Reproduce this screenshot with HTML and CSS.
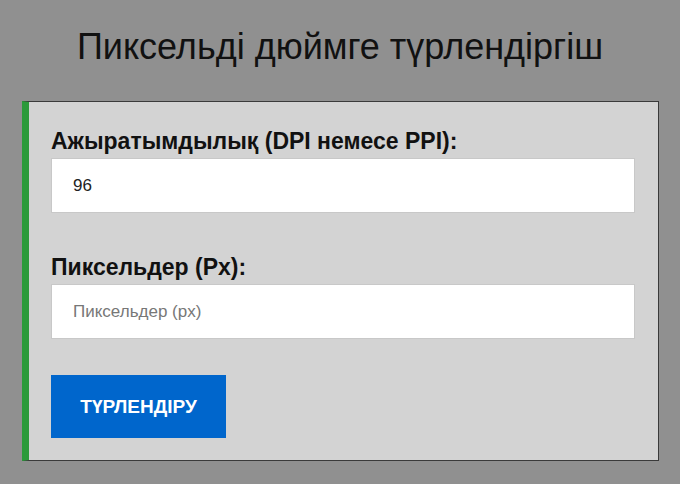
FILE: index.html
```html
<!DOCTYPE html>
<html lang="kk">
<head>
<meta charset="utf-8">
<title>Пиксельді дюймге түрлендіргіш</title>
<link rel="stylesheet" href="styles.css">
</head>
<body>
<h1 class="title">Пиксельді дюймге түрлендіргіш</h1>
<div class="panel">
  <div class="field">
    <label class="label" for="dpi">Ажыратымдылық (DPI немесе PPI):</label>
    <input class="input" id="dpi" type="text" value="96">
  </div>
  <div class="field">
    <label class="label" for="px">Пиксельдер (Px):</label>
    <input class="input" id="px" type="text" placeholder="Пиксельдер (px)">
  </div>
  <button class="btn" type="button">ТҮРЛЕНДІРУ</button>
</div>
</body>
</html>
```
FILE: styles.css
```css
html, body {
  margin: 0;
  padding: 0;
}
body {
  background: #909090;
  font-family: "Liberation Sans", Arial, sans-serif;
  color: #111;
  width: 680px;
  height: 484px;
  overflow: hidden;
}
.title {
  margin: 0;
  padding-top: 27px;
  height: 101px;
  box-sizing: border-box;
  text-align: center;
  font-weight: normal;
  font-size: 36px;
  line-height: 40px;
  color: #111;
}
.panel {
  margin: 0 21px 0 22px;
  background: #d3d3d3;
  border: 1px solid #3a3a3a;
  border-left: 7px solid #2b9a3a;
  padding: 26px 23px 22px 22px;
  display: flex;
  flex-direction: column;
  align-items: flex-start;
}
.field {
  align-self: stretch;
  display: flex;
  flex-direction: column;
}
.field + .field {
  margin-top: 41px;
}
.label {
  font-weight: bold;
  font-size: 23px;
  line-height: 26px;
  margin-bottom: 4px;
  color: #111;
}
.input {
  height: 55px;
  box-sizing: border-box;
  border: 1px solid #c8c8c8;
  background: #fff;
  padding: 0 21px;
  font-family: "Liberation Sans", Arial, sans-serif;
  font-size: 17px;
  color: #222;
  outline: none;
}
.input::placeholder {
  color: #777;
}
.btn {
  margin-top: 36px;
  width: 175px;
  height: 63px;
  border: none;
  background: #0066cc;
  color: #fff;
  font-family: "Liberation Sans", Arial, sans-serif;
  font-weight: bold;
  font-size: 19px;
  padding: 0;
}
```
